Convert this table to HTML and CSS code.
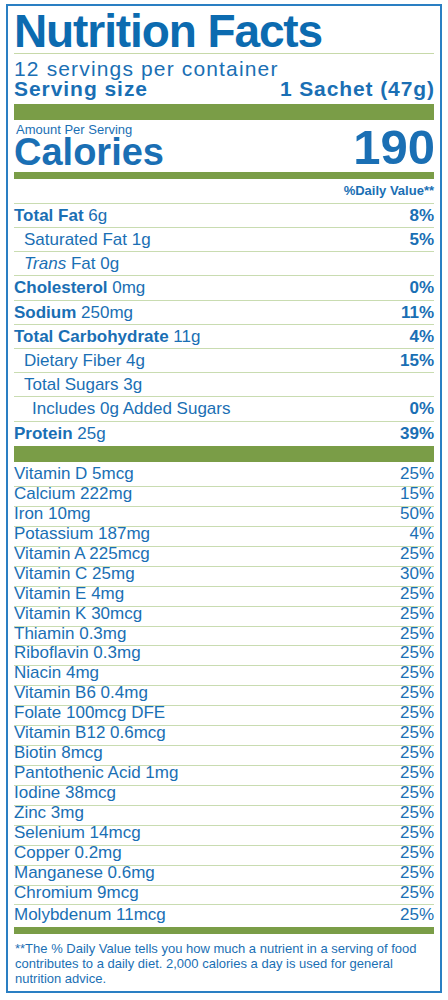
FILE: index.html
```html
<!DOCTYPE html>
<html lang="en">
<head>
<meta charset="utf-8">
<title>Nutrition Facts</title>
<link rel="stylesheet" href="styles.css">
</head>
<body>
<section class="label">
  <h1 class="title">Nutrition Facts</h1>
  <p class="servings">12 servings per container</p>
  <div class="serving-size"><span class="ss-label">Serving size</span><span class="ss-value">1 Sachet (47g)</span></div>
  <div class="bar bar-thick"></div>
  <div class="calories">
    <div class="cal-left">
      <div class="amount">Amount Per Serving</div>
      <div class="cal-label">Calories</div>
    </div>
    <div class="cal-value">190</div>
  </div>
  <div class="bar bar-thin"></div>
  <div class="dv-head">%Daily Value**</div>
  <ul class="nutrients">
    <li class="row"><span><b>Total Fat</b> 6g</span><b>8%</b></li>
    <li class="row sub"><span>Saturated Fat 1g</span><b>5%</b></li>
    <li class="row sub"><span><i>Trans</i> Fat 0g</span><b></b></li>
    <li class="row"><span><b>Cholesterol</b> 0mg</span><b>0%</b></li>
    <li class="row"><span><b>Sodium</b> 250mg</span><b>11%</b></li>
    <li class="row"><span><b>Total Carbohydrate</b> 11g</span><b>4%</b></li>
    <li class="row sub"><span>Dietary Fiber 4g</span><b>15%</b></li>
    <li class="row sub"><span>Total Sugars 3g</span><b></b></li>
    <li class="row subsub"><span>Includes 0g Added Sugars</span><b>0%</b></li>
    <li class="row"><span><b>Protein</b> 25g</span><b>39%</b></li>
  </ul>
  <div class="bar bar-thick bar-mid"></div>
  <ul class="vitamins">
    <li class="vit"><span>Vitamin D 5mcg</span><span>25%</span></li>
    <li class="vit"><span>Calcium 222mg</span><span>15%</span></li>
    <li class="vit"><span>Iron 10mg</span><span>50%</span></li>
    <li class="vit"><span>Potassium 187mg</span><span>4%</span></li>
    <li class="vit"><span>Vitamin A 225mcg</span><span>25%</span></li>
    <li class="vit"><span>Vitamin C 25mg</span><span>30%</span></li>
    <li class="vit"><span>Vitamin E 4mg</span><span>25%</span></li>
    <li class="vit"><span>Vitamin K 30mcg</span><span>25%</span></li>
    <li class="vit"><span>Thiamin 0.3mg</span><span>25%</span></li>
    <li class="vit"><span>Riboflavin 0.3mg</span><span>25%</span></li>
    <li class="vit"><span>Niacin 4mg</span><span>25%</span></li>
    <li class="vit"><span>Vitamin B6 0.4mg</span><span>25%</span></li>
    <li class="vit"><span>Folate 100mcg DFE</span><span>25%</span></li>
    <li class="vit"><span>Vitamin B12 0.6mcg</span><span>25%</span></li>
    <li class="vit"><span>Biotin 8mcg</span><span>25%</span></li>
    <li class="vit"><span>Pantothenic Acid 1mg</span><span>25%</span></li>
    <li class="vit"><span>Iodine 38mcg</span><span>25%</span></li>
    <li class="vit"><span>Zinc 3mg</span><span>25%</span></li>
    <li class="vit"><span>Selenium 14mcg</span><span>25%</span></li>
    <li class="vit"><span>Copper 0.2mg</span><span>25%</span></li>
    <li class="vit"><span>Manganese 0.6mg</span><span>25%</span></li>
    <li class="vit"><span>Chromium 9mcg</span><span>25%</span></li>
    <li class="vit"><span>Molybdenum 11mcg</span><span>25%</span></li>
  </ul>
  <div class="bar bar-thin"></div>
  <p class="footnote">**The % Daily Value tells you how much a nutrient in a serving of food contributes to a daily diet. 2,000 calories a day is used for general nutrition advice.</p>
</section>
</body>
</html>
```

FILE: styles.css
```css
* {
  box-sizing: border-box;
}

html,
body {
  margin: 0;
  padding: 0;
  background: #ffffff;
}

body {
  font-family: "Liberation Sans", Arial, Helvetica, sans-serif;
  color: #1a6fb4;
}

.label {
  width: 436px;
  margin: 4px 0 0 6px;
  border: 2px solid #2a7fc3;
  padding: 3px 6px 5px 6px;
}

.title {
  margin: 0;
  font-size: 46px;
  line-height: 44px;
  font-weight: 700;
  letter-spacing: -1.1px;
  color: #0c6bb0;
  border-bottom: 1px solid #c7d9a9;
}

.servings {
  margin: 5px 0 0;
  font-size: 21px;
  line-height: 20.4px;
  letter-spacing: 1.15px;
}

.serving-size {
  display: flex;
  justify-content: space-between;
  font-size: 21px;
  line-height: 20.4px;
  font-weight: 700;
}

.ss-label {
  letter-spacing: 0.95px;
}

.ss-value {
  letter-spacing: 0.9px;
  margin-right: -0.9px;
}

.bar {
  background: #7a9d47;
}

.bar-thick {
  height: 16px;
  margin-top: 4px;
}

.bar-mid {
  margin-top: 1px;
}

.bar-thin {
  height: 7px;
  margin-top: 4px;
}

.vitamins + .bar-thin {
  margin-top: 0;
}

.calories {
  display: flex;
  justify-content: space-between;
  align-items: flex-end;
  padding-top: 4px;
}

.amount {
  font-size: 13px;
  line-height: 12px;
  padding-left: 2px;
}

.cal-label {
  font-size: 38px;
  line-height: 32px;
  font-weight: 700;
}

.cal-value {
  font-size: 49px;
  line-height: 39.6px;
  font-weight: 700;
  margin-right: -1px;
}

.dv-head {
  text-align: right;
  font-size: 13px;
  line-height: 16px;
  font-weight: 700;
  padding: 4px 0;
  border-bottom: 1px solid #c9dcb1;
}

.nutrients,
.vitamins {
  list-style: none;
  margin: 0;
  padding: 0;
}

.row {
  display: flex;
  justify-content: space-between;
  font-size: 17px;
  line-height: 23.2px;
  border-bottom: 1px solid #c9dcb1;
}

.row:last-child {
  border-bottom: none;
}

.row b {
  font-weight: 700;
}

.row i {
  font-style: italic;
}

.sub {
  padding-left: 10px;
}

.subsub {
  padding-left: 18px;
}

.vit {
  display: flex;
  justify-content: space-between;
  font-size: 17px;
  line-height: 14.92px;
  padding-bottom: 4px;
  border-bottom: 1px solid #c9dcb1;
}

.vit:first-child {
  padding-top: 5.3px;
}

.vit:last-child {
  border-bottom: none;
  padding-top: 2.5px;
  padding-bottom: 4.1px;
}

.footnote {
  margin: 0;
  padding: 7px 0 0 1px;
  font-size: 13px;
  line-height: 15px;
}
```
